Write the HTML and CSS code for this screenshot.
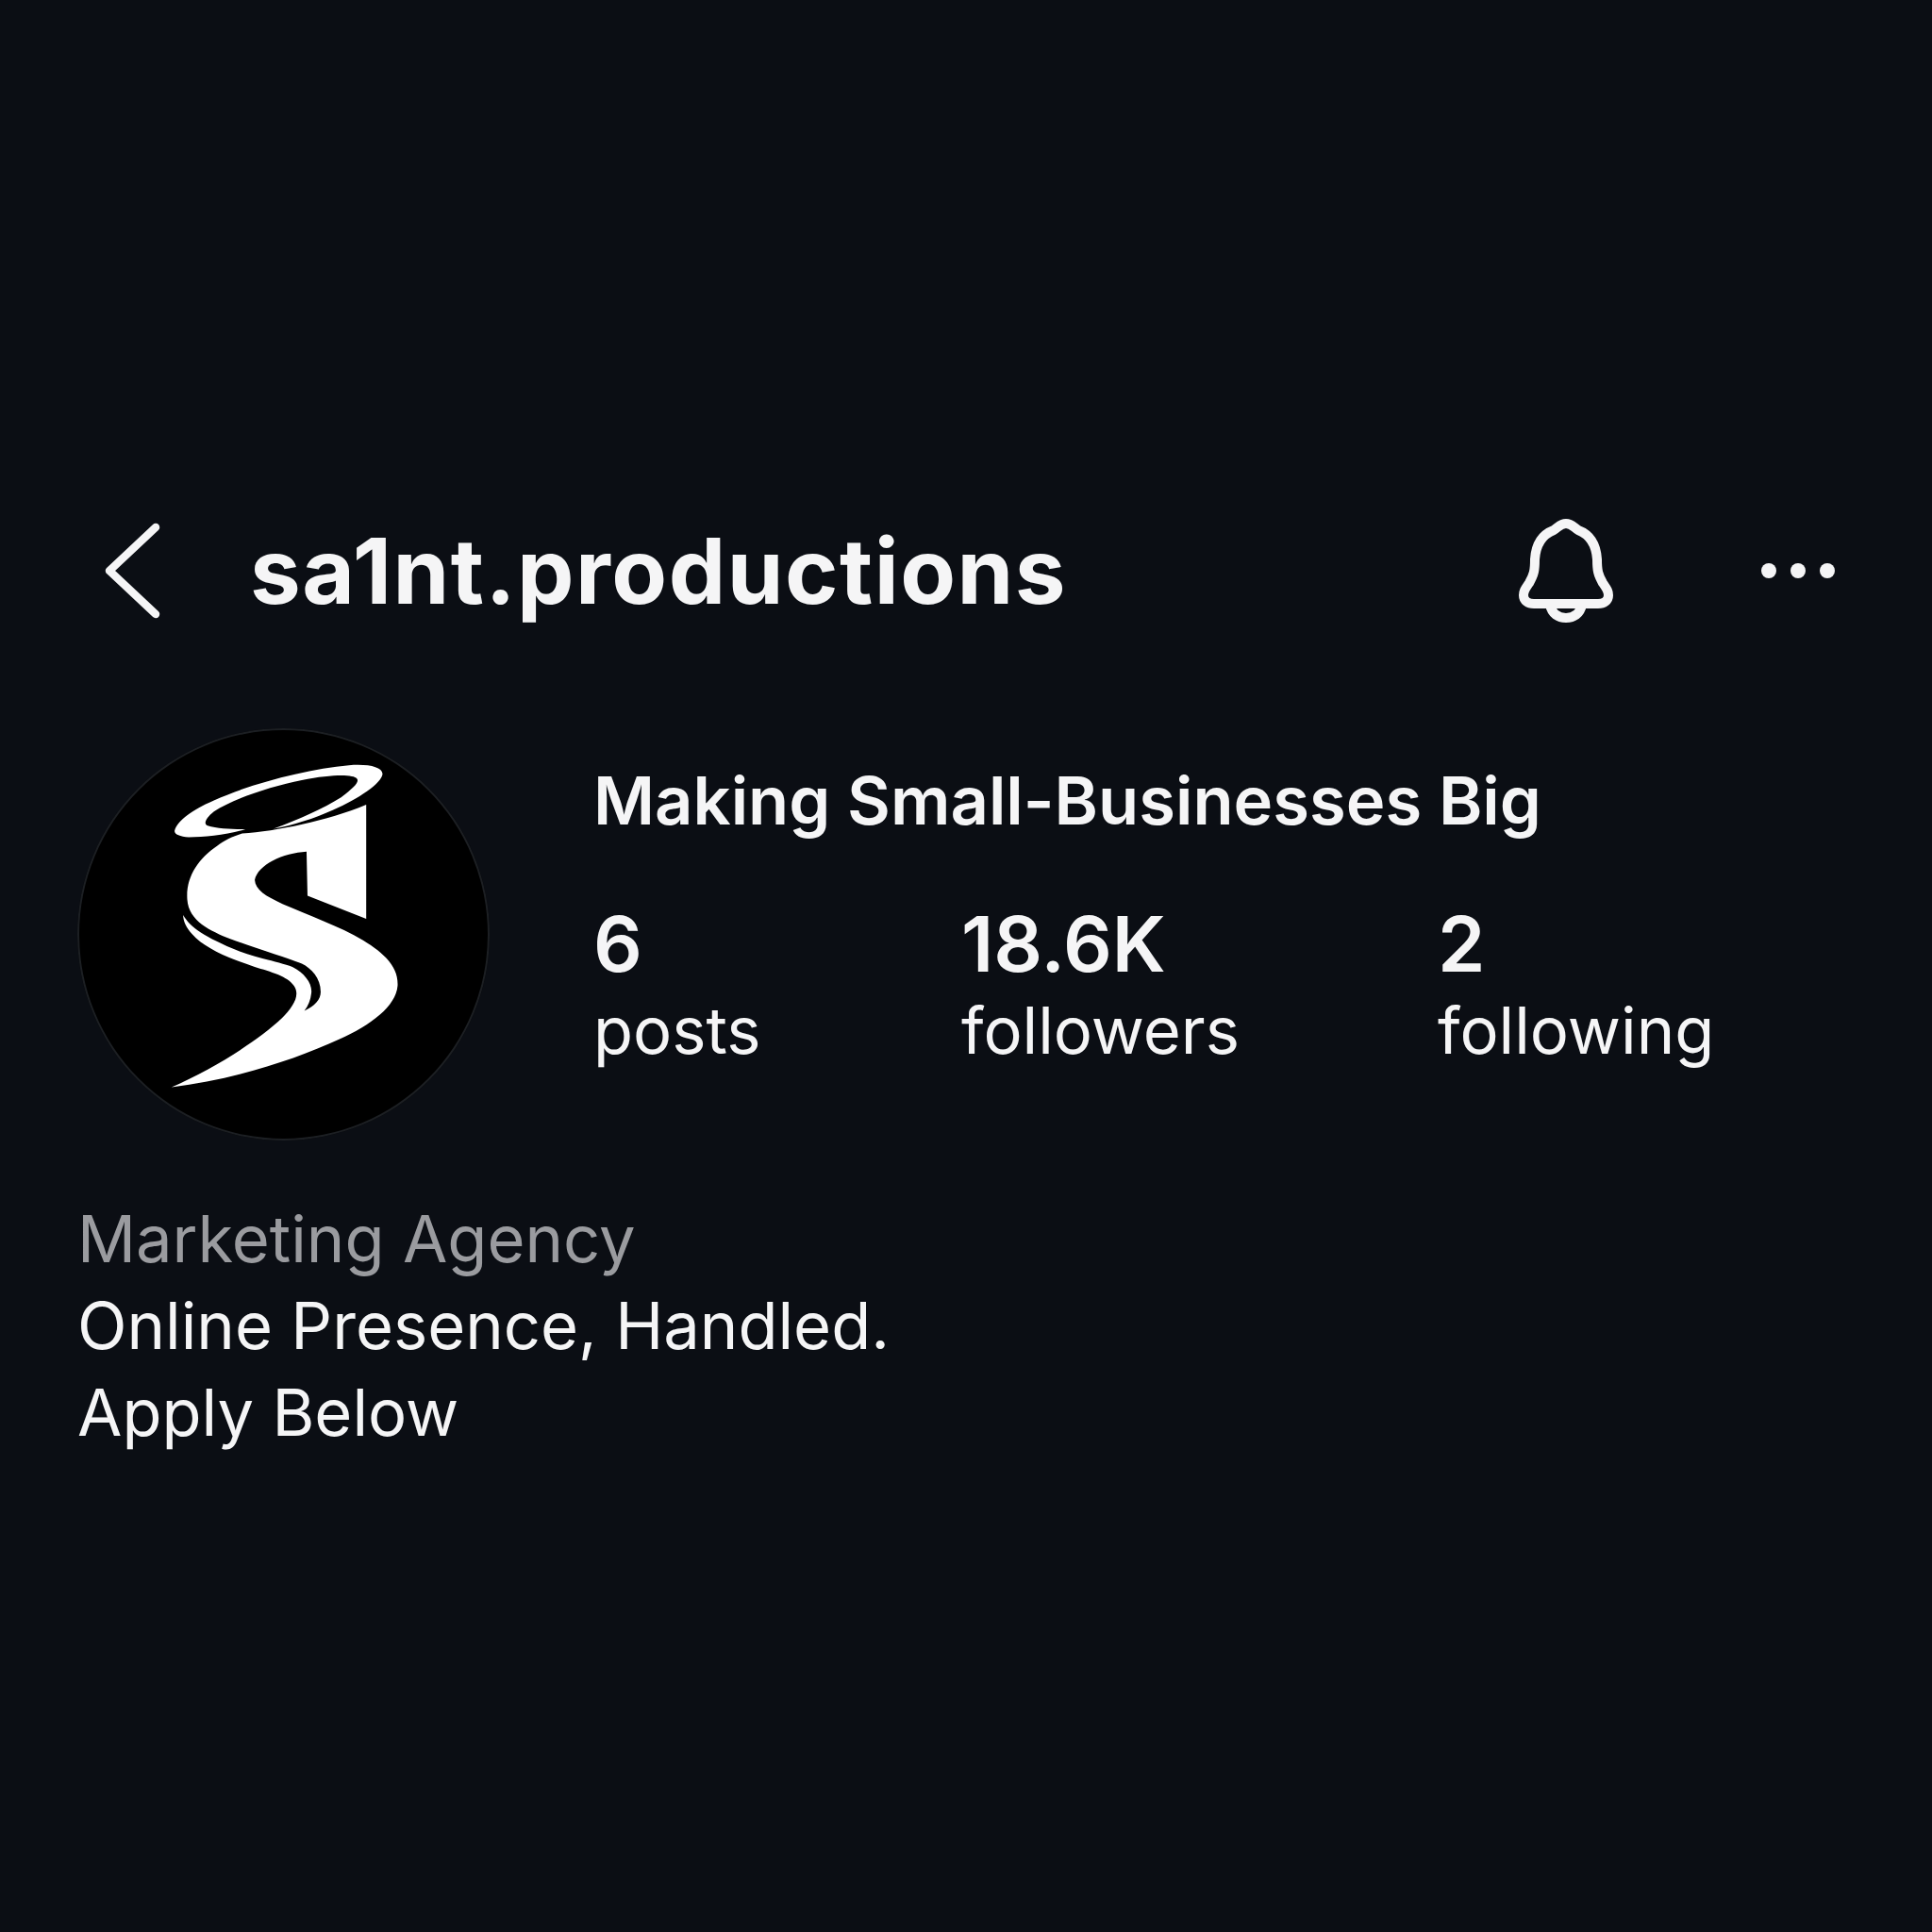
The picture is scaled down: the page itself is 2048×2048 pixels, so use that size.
FILE: index.html
```html
<!DOCTYPE html>
<html lang="en">
<head>
  <meta charset="UTF-8" />
  <title>sa1nt.productions</title>
  <link rel="stylesheet" href="styles.css">
</head>
<body>
  <div class="profile">
    <div class="topbar">
      <svg class="back" viewBox="0 0 60 104"><path d="M55 6 L6 52 L55 98" /></svg>
      <h1 class="username">sa1nt.productions</h1>
      <svg class="bell" viewBox="0 0 104 116">
        <path d="M52 8 C58 8 60 12 65 15 C78 20 84 30 85 46 C85 58 86 62 91 71 C95 77 97 79 97 84 C97 90 92 93 86 93 L18 93 C12 93 7 90 7 84 C7 79 9 77 13 71 C18 62 19 58 19 46 C20 30 26 20 39 15 C44 12 46 8 52 8 Z" />
        <path d="M35 94 C37 104 44 108 52 108 C60 108 67 104 69 94" />
      </svg>
      <div class="more"><span></span><span></span><span></span></div>
    </div>

    <div class="summary">
      <div class="avatar">
        <svg class="logo" viewBox="65 65 1313 1313">
          <path d="M375 390 C385 360 430 325 500 295 C620 240 800 195 930 183 C990 178 1035 188 1037 210 C1035 240 960 290 880 325 C820 352 750 375 690 385 C770 355 850 320 905 285 C945 255 965 235 955 225 C945 212 880 210 780 230 C680 250 560 290 500 330 C475 350 465 370 480 375 C510 385 560 386 600 387 C540 405 470 412 420 412 C390 410 372 402 375 390 Z" />
          <path d="M985 308 L985 672 L798 598 L795 458 C720 462 640 500 630 548 C632 580 665 600 720 625 C800 660 900 695 975 740 C1050 785 1088 830 1085 885 C1080 950 1000 1010 900 1055 C760 1120 560 1185 365 1208 C500 1150 640 1060 715 990 C755 950 775 915 755 885 C735 855 680 840 630 825 C540 795 470 765 430 720 C412 700 402 680 402 660 C425 700 470 730 580 775 C640 797 710 810 750 825 C790 845 815 880 810 910 C808 930 800 950 788 965 C820 950 840 930 840 905 C840 860 810 830 780 815 C730 795 620 760 550 735 C490 710 420 680 415 610 C410 540 450 480 510 440 C535 420 560 410 590 400 C700 392 860 360 985 308 Z" />
        </svg>
      </div>
      <div class="details">
        <div class="display-name">Making Small-Businesses Big</div>
        <div class="stats">
          <div class="stat stat-posts"><b>6</b><span>posts</span></div>
          <div class="stat stat-followers"><b>18.6K</b><span>followers</span></div>
          <div class="stat"><b>2</b><span>following</span></div>
        </div>
      </div>
    </div>

    <div class="bio">
      <div class="category">Marketing Agency</div>
      <div>Online Presence, Handled.</div>
      <div>Apply Below</div>
    </div>
  </div>
</body>
</html>
```

FILE: styles.css
```css
body {
  margin: 0;
  height: 2048px;
  background-color: #0b0e14;
  color: #f5f5f6;
  font-family: Inter, sans-serif;
}
.profile {
  padding-top: 545px;
}
.topbar {
  display: flex;
  align-items: center;
  height: 120px;
  padding-left: 110px;
}
.back {
  width: 60px;
  height: 104px;
  fill: none;
  stroke: #f5f5f6;
  stroke-width: 8.5;
  stroke-linecap: round;
  stroke-linejoin: round;
  overflow: visible;
}
.username {
  margin: 0 0 0 95px;
  width: 1346px;
  font-size: 96px;
  font-weight: 700;
  letter-spacing: 1.5px;
}
.bell {
  width: 104px;
  height: 116px;
  margin-left: -3px;
  fill: none;
  stroke: #f5f5f6;
  stroke-width: 10;
  stroke-linejoin: round;
}
.more {
  display: flex;
  gap: 15px;
  margin-left: 155px;
}
.more span {
  width: 16px;
  height: 16px;
  border-radius: 50%;
  background-color: #f5f5f6;
}
.summary {
  display: flex;
  margin-top: 107px;
  padding-left: 82px;
}
.avatar {
  width: 437px;
  height: 437px;
  border-radius: 50%;
  background-color: #000;
  box-shadow: inset 0 0 0 2px #1c1f23;
}
.logo {
  display: block;
  width: 437px;
  height: 437px;
  fill: #fff;
}
.details {
  margin-left: 112px;
  padding-top: 37px;
}
.display-name {
  margin-left: -2px;
  font-size: 70.5px;
  font-weight: 600;
  line-height: 80px;
}
.stats {
  display: flex;
  margin-top: 67px;
  margin-left: -2px;
}
.stat {
  display: flex;
  flex-direction: column;
}
.stat b {
  font-size: 81px;
  font-weight: 600;
  line-height: 90px;
}
.stat span {
  font-size: 68.7px;
  line-height: 92px;
}
.stat-posts {
  width: 390px;
}
.stat-followers {
  width: 505px;
}
.bio {
  margin-top: 58px;
  padding-left: 82px;
  font-size: 68.7px;
  line-height: 92px;
}
.category {
  color: #9a9b9f;
}
```
